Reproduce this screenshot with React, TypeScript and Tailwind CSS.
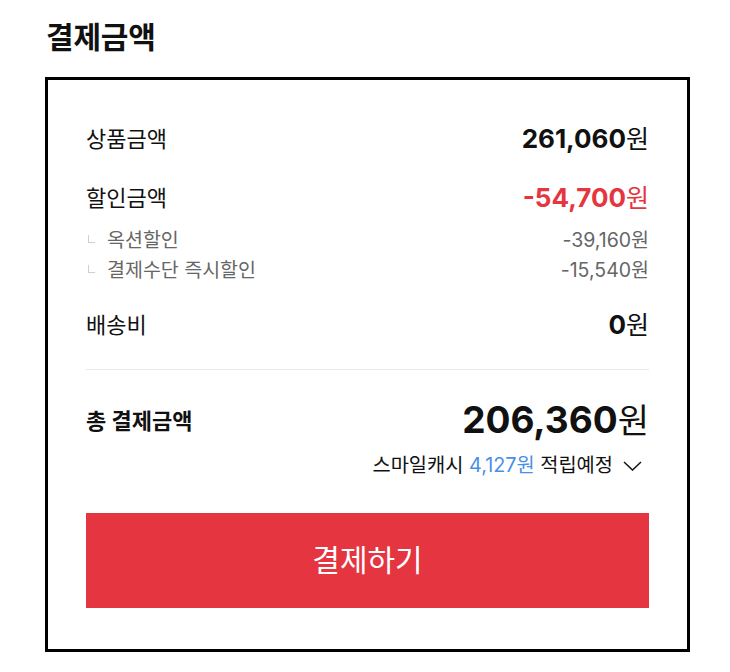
const font = { fontFamily: '"Inter", "Noto Sans CJK KR", sans-serif' }

const subDiscounts = [
  { name: '옥션할인', amount: '-39,160' },
  { name: '결제수단 즉시할인', amount: '-15,540' },
]

export default function App() {
  return (
    <div className="w-[730px] h-[672px] bg-white text-[#111] pl-[45px]" style={font}>
      <h1 className="pt-[19px] h-[55px] pl-[1px] text-[30px] leading-[36px] font-bold tracking-[-0.2px]">결제금액</h1>
      <div className="mt-[22px] w-[645px] border-[3px] border-black px-[38px] pt-[43px] pb-[41px]">
        <Row label="상품금액" amount="261,060" />
        <div className="mt-[27px]">
          <Row label="할인금액" amount="-54,700" red />
        </div>
        <div className="mt-[12px]">
          {subDiscounts.map((d) => (
            <div key={d.name} className="h-[30px] flex items-center justify-between text-[#666]">
              <div className="flex items-center">
                <span className="ml-[2px] mb-[4px] w-[7px] h-[8px] border-l border-b border-[#cfcfcf]" />
                <span className="ml-[12px] text-[19.5px]">{d.name}</span>
              </div>
              <span className="text-[19.5px]">{d.amount}원</span>
            </div>
          ))}
        </div>
        <div className="mt-[23px]">
          <Row label="배송비" amount="0" />
        </div>
        <div className="mt-[28px] h-px bg-[#e8e8e8]" />
        <div className="mt-[28px] h-[44px] flex items-center justify-between">
          <span className="text-[22px] font-bold pt-[3px]">총 결제금액</span>
          <span className="flex items-baseline">
            <span className="text-[37px] font-bold">206,360</span>
            <span className="text-[34px]">원</span>
          </span>
        </div>
        <div className="mt-[12px] h-[24px] flex items-center justify-end text-[19.8px] pr-[7px]">
          <span>스마일캐시 <span className="text-[#4a8fe6]">4,127원</span> 적립예정</span>
          <svg className="ml-[10px]" width="19" height="10" viewBox="0 0 19 10" fill="none">
            <polyline points="1,1 9.5,9 18,1" stroke="#111" strokeWidth="1.5" />
          </svg>
        </div>
        <button className="mt-[35px] w-full h-[95px] bg-[#e53540] text-white text-[30px]">결제하기</button>
      </div>
    </div>
  )
}

function Row({ label, amount, red }: { label: string, amount: string, red?: boolean }) {
  return (
    <div className="h-[32px] flex items-center justify-between">
      <span className="text-[22px]">{label}</span>
      <span className={red ? 'flex items-baseline text-[#e53540]' : 'flex items-baseline'}>
        <span className="text-[26px] font-bold">{amount}</span>
        <span className="text-[25px]">원</span>
      </span>
    </div>
  )
}
